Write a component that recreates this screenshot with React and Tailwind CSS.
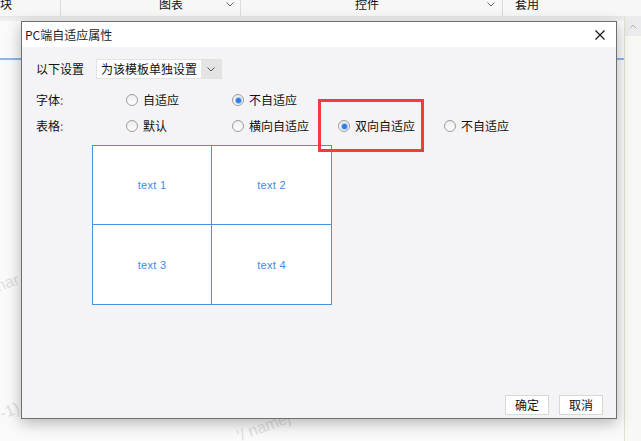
import React from 'react';

const cjk = { fontFamily: '"Noto Sans CJK SC", "Microsoft YaHei", sans-serif' };
const latin = { fontFamily: '"Liberation Sans", sans-serif' };

const Radio = ({ checked }) => (
    <span className="flex h-[12px] w-[12px] shrink-0 items-center justify-center rounded-full border border-[#9c9c9c] bg-gradient-to-b from-[#ececec] to-white">
        {checked && <span className="h-[5px] w-[5px] rounded-full bg-[#2f7de1] ring-1 ring-[#9cc3f2]" />}
    </span>
);

const Option = ({ label, checked }) => (
    <div className="flex w-[106px] items-center gap-[5px]">
        <Radio checked={checked} />
        <span>{label}</span>
    </div>
);

const Label = ({ text }) => (
    <div className="w-[90px]">
        {text}
        <span className="text-[#8a4a9a]">:</span>
    </div>
);

const Chevron = ({ className }) => (
    <svg width="8" height="5" viewBox="0 0 8 5" className={className}>
        <path d="M0.5 0.5 L4 4 L7.5 0.5" fill="none" stroke="currentColor" strokeWidth="1" />
    </svg>
);

const cells = ['text 1', 'text 2', 'text 3', 'text 4'];

export default function App() {
    return (
        <div className="relative h-[441px] w-[641px] overflow-hidden bg-[#fafafa] text-[12px] leading-[14px] text-[#111]" style={cjk}>
            {/* toolbar behind the dialog, scrolled so its labels are cut at the top */}
            <div className="relative h-[16px] bg-[#f7f7f7]">
                <span className="absolute left-[-12px] top-[-3px]">区块</span>
                <span className="absolute left-[60px] top-0 h-[16px] w-px bg-[#dcdcdc]" />
                <span className="absolute left-[159px] top-[-3px]">图表</span>
                <Chevron className="absolute left-[226px] top-[2px] text-[#666]" />
                <span className="absolute left-[240px] top-0 h-[16px] w-px bg-[#dcdcdc]" />
                <span className="absolute left-[355px] top-[-3px]">控件</span>
                <Chevron className="absolute left-[487px] top-[2px] text-[#666]" />
                <span className="absolute left-[502px] top-0 h-[16px] w-px bg-[#dcdcdc]" />
                <span className="absolute left-[515px] top-[-3px]">套用</span>
            </div>
            <div className="h-[5px] bg-gradient-to-b from-[#e6e6e6] to-[#f2f2f2]" />
            <div className="absolute left-0 top-[58px] h-[2px] w-full bg-[#8db6ea]" />

            {/* right scroll column */}
            <div className="absolute bottom-0 right-0 top-[16px] w-[17px] border-l border-[#e2e2d4] bg-[#f8f8f4]">
                <div className="flex h-[20px] items-center justify-center bg-[#ececec]">
                    <Chevron className="rotate-180 text-[#b5b5b5]" />
                </div>
            </div>

            {/* watermarks */}
            <span className="absolute left-[-4px] top-[276px] -rotate-[20deg] text-[16px] text-[#dedede]" style={latin}>nar</span>
            <span className="absolute left-[0px] top-[404px] -rotate-[20deg] text-[16px] text-[#dedede]" style={latin}>-1)</span>
            <span className="absolute left-[236px] top-[420px] -rotate-[20deg] text-[16px] text-[#dedede]" style={latin}>'/ namej</span>

            {/* dialog */}
            <div className="absolute left-[21px] top-[21px] flex h-[398px] w-[596px] flex-col border border-[#6f6f6f] bg-[#f4f4f6] shadow-[0_4px_14px_rgba(0,0,0,0.28)]">
                <div className="flex h-[25px] items-center justify-between bg-white pl-[3px] pr-[11px]">
                    <span className="text-[#222]">PC端自适应属性</span>
                    <svg width="10" height="10" viewBox="0 0 10 10">
                        <path d="M0.5 0.5 L9.5 9.5 M9.5 0.5 L0.5 9.5" stroke="#111" strokeWidth="1.1" />
                    </svg>
                </div>

                <div className="relative flex flex-1 flex-col pl-[14px] pt-[12px]">
                    <div className="flex h-[20px] items-center gap-[12px]">
                        <span>以下设置</span>
                        <div className="flex h-[20px] border border-[#e2e2e2] bg-white">
                            <span className="flex w-[104px] items-center pl-[4px]">为该模板单独设置</span>
                            <span className="flex w-[20px] items-center justify-center bg-[#e4e4e4] text-[#555]">
                                <Chevron />
                            </span>
                        </div>
                    </div>

                    <div className="mt-[11px] flex h-[20px] items-center">
                        <Label text="字体" />
                        <Option label="自适应" />
                        <Option label="不自适应" checked />
                    </div>

                    <div className="mt-[6px] flex h-[20px] items-center">
                        <Label text="表格" />
                        <Option label="默认" />
                        <Option label="横向自适应" />
                        <Option label="双向自适应" checked />
                        <Option label="不自适应" />
                    </div>

                    <div className="ml-[56px] mt-[9px] grid h-[160px] w-[240px] grid-cols-2 grid-rows-2 border border-[#4a8fe8] bg-white">
                        {cells.map((c, i) => (
                            <div
                                key={c}
                                className={`flex items-center justify-center text-[11px] tracking-[0.3px] text-[#3f8ae6] ${i % 2 === 0 ? 'border-r border-[#4a8fe8]' : ''} ${i < 2 ? 'border-b border-[#4a8fe8]' : ''}`}
                                style={latin}
                            >
                                {c}
                            </div>
                        ))}
                    </div>

                    <div className="flex-1" />

                    <div className="flex justify-end gap-[10px] pb-[3px] pr-[13px]">
                        <button className="flex h-[20px] w-[44px] items-center justify-center border border-[#d8d8d8] bg-white">确定</button>
                        <button className="flex h-[20px] w-[44px] items-center justify-center border border-[#d8d8d8] bg-white">取消</button>
                    </div>

                    <div className="absolute left-[296px] top-[52px] h-[53px] w-[106px] border-[3px] border-[#f63b3b]" />
                </div>
            </div>
        </div>
    );
}
